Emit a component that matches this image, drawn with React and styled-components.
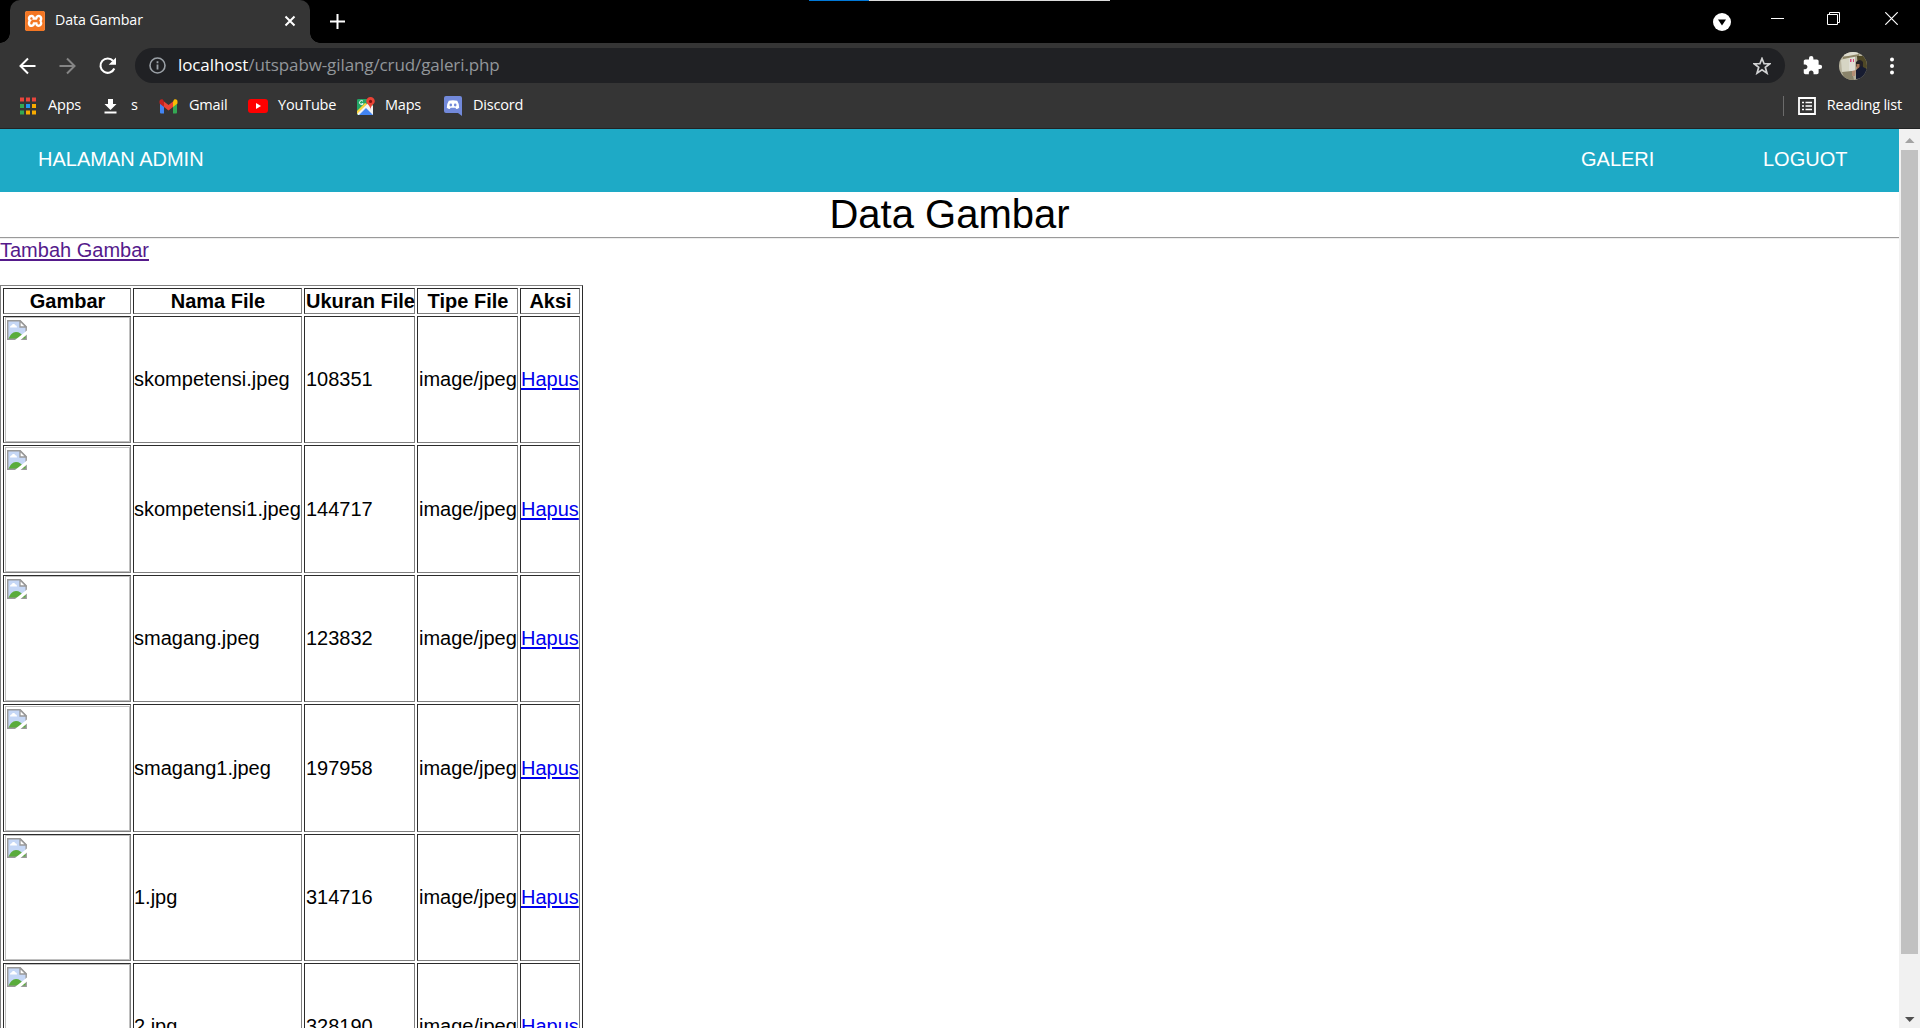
import React from "react";
import styled, { createGlobalStyle } from "styled-components";
import { SiXampp } from "react-icons/si";

const Global = createGlobalStyle`
  * { box-sizing: border-box; }
  html, body { margin: 0; padding: 0; overflow: hidden; background: #fff; }
`;

const ui = `"Open Sans", "Noto Sans", sans-serif`;

const Window = styled.div`
  width: 1920px;
  height: 1028px;
  display: flex;
  flex-direction: column;
  overflow: hidden;
  font-family: "Liberation Sans", Arial, sans-serif;
  color: #000;
`;

const TabStrip = styled.header`
  position: relative;
  height: 43px;
  flex: none;
  display: flex;
  background: #000;
  padding-left: 10px;
`;

const TaskLine = styled.div`
  position: absolute;
  top: 0;
  left: 809px;
  width: 301px;
  height: 1px;
  background: linear-gradient(to right, #0078d7 60px, #dcdcdc 60px);
`;

const Tab = styled.div`
  position: relative;
  width: 300px;
  height: 43px;
  background: #353535;
  border-radius: 10px 10px 0 0;
  display: flex;
  align-items: center;
  padding: 0 14px 1px 15px;
  &::before, &::after {
    content: "";
    position: absolute;
    bottom: 0;
    width: 10px;
    height: 10px;
  }
  &::before { left: -10px; background: radial-gradient(circle at 0 0, #000 9.5px, #353535 10px); }
  &::after { right: -10px; background: radial-gradient(circle at 100% 0, #000 9.5px, #353535 10px); }
`;

const Favicon = styled.div`
  width: 20px;
  height: 20px;
  border-radius: 3px;
  background: #fff;
  color: #f37623;
  svg { display: block; }
`;

const Label = styled.span`
  font-family: ${ui};
  font-size: ${(p) => p.$size || 14.5}px;
  letter-spacing: ${(p) => (p.$track === undefined ? -0.2 : p.$track)}px;
  line-height: 20px;
  white-space: nowrap;
  color: ${(p) => p.$color || "#fff"};
`;

const TabTitle = styled.div`
  flex: 1;
  margin-left: 10px;
  padding-bottom: 2px;
  display: flex;
`;

const NewTab = styled.div`
  margin-left: 20px;
  display: flex;
  align-items: center;
`;

const WindowControls = styled.div`
  margin-left: auto;
  display: flex;
  align-items: flex-start;
  padding: 12px 22px 0 0;
  svg { display: block; }
`;

const Control = styled.div`
  margin-left: ${(p) => p.$gap || 0}px;
  margin-top: ${(p) => p.$drop || 0}px;
`;

const Toolbar = styled.div`
  height: 45px;
  flex: none;
  display: flex;
  align-items: center;
  background: #353535;
  padding: 0 23px 0 18px;
  svg { display: block; flex: none; }
`;

const NavIcon = styled.div`
  width: 20px;
  margin-right: 20px;
`;

const Omnibox = styled.div`
  width: 1650px;
  height: 35px;
  margin-left: -3px;
  border-radius: 18px;
  background: #202124;
  display: flex;
  align-items: center;
  padding: 0 14px 0 14px;
`;

const Address = styled.div`
  flex: 1;
  margin-left: 12px;
  padding-bottom: 1px;
  display: flex;
`;

const Extension = styled.div`
  margin-left: 17px;
`;

const Avatar = styled.div`
  margin-left: 16px;
`;

const Menu = styled.div`
  margin-left: auto;
`;

const Bookmarks = styled.div`
  height: 41px;
  flex: none;
  display: flex;
  align-items: flex-start;
  background: #353535;
  border-bottom: 1px solid #222324;
  padding: 7px 18px 0 19px;
  ${Label} { margin-bottom: 2px; }
`;

const Bookmark = styled.div`
  width: ${(p) => p.$width}px;
  display: flex;
  align-items: center;
  gap: ${(p) => p.$gap || 11}px;
  svg { display: block; flex: none; }
`;

const ReadingList = styled.div`
  margin: 1px 0 0 auto;
  height: 20px;
  display: flex;
  align-items: center;
  gap: 11px;
  border-left: 1px solid #6b6b6b;
  padding-left: 14px;
`;

const Viewport = styled.div`
  flex: 1;
  min-height: 0;
  display: flex;
`;

const Page = styled.main`
  flex: 1;
  overflow: hidden;
  background: #fff;
`;

const SiteNav = styled.nav`
  height: 63px;
  background: #1eaac6;
  color: #fff;
  display: flex;
  padding: 18px 52px 0 38px;
  font-size: 20px;
  line-height: 24px;
`;

const NavItem = styled.span`
  display: block;
  width: ${(p) => p.$width}px;
  white-space: nowrap;
`;

const NavLinks = styled.div`
  margin-left: auto;
  display: flex;
  gap: 108px;
`;

const Title = styled.h1`
  margin: 0;
  height: 45px;
  font-weight: 400;
  font-size: 40px;
  line-height: 45px;
  text-align: center;
`;

const Rule = styled.hr`
  margin: 0;
  height: 2px;
  border: 0;
  border-top: 1px solid #9a9a9a;
  background: #eee;
`;

const Actions = styled.div`
  height: 46px;
  font-size: 20px;
  line-height: 23px;
`;

const Link = styled.a`
  color: ${(p) => (p.$visited ? "#551a8b" : "#0000ee")};
  text-decoration: underline;
  text-decoration-thickness: 2px;
  text-underline-offset: 2px;
`;

const Table = styled.table`
  width: 583px;
  table-layout: fixed;
  border: 1px solid;
  border-color: #808080 #2b2b2b #2b2b2b #808080;
  border-collapse: separate;
  border-spacing: 2px;
  font-size: 20px;
  line-height: 23px;
`;

const HeadCell = styled.th`
  height: 26px;
  padding: 0 0 0 1px;
  border: 1px solid;
  border-color: #2b2b2b #808080 #808080 #2b2b2b;
  white-space: nowrap;
`;

const Cell = styled.td`
  height: ${(p) => p.$height}px;
  padding: 0 0 0 ${(p) => p.$inset || 0}px;
  border: 1px solid;
  border-color: #2b2b2b #808080 #808080 #2b2b2b;
  white-space: nowrap;
`;

const PictureCell = styled(Cell)`
  padding: ${(p) => p.$height - 127}px 0 0 1px;
  vertical-align: top;
`;

const Missing = styled.div`
  width: 125px;
  height: 125px;
  border: 1px solid #c0c0c0;
  padding: 2px 1px;
  svg { display: block; }
`;

const Scrollbar = styled.div`
  width: 21px;
  flex: none;
  background: #f1f1f1;
  display: flex;
  flex-direction: column;
  align-items: center;
  svg { display: block; flex: none; }
`;

const Thumb = styled.div`
  width: 17px;
  height: 804px;
  background: #c1c1c1;
  margin-bottom: auto;
`;

const BrokenIcon = () => (
  <svg width="20" height="20" viewBox="0 0 20 20">
    <path d="M1 1h12l6 6v12H1z" fill="#c5d7f6" />
    <path d="M3 7.500c0-1.600 1-2 1.600-2C5 3.400 7.800 3.400 8.200 5.200c1.300 0 1.800 1 1.800 2.300z" fill="#fff" />
    <path d="M1.500 19c1.500-4 4-7 7.500-7s5 2 6.500 3.500L19 14v5z" fill="#5aac3c" />
    <path d="M.7.7h12.500l6 6V19.300H.7z" fill="none" stroke="#999" strokeWidth="1.4" />
    <path d="M13 1v6h6z" fill="#fff" stroke="#999" strokeWidth="1.3" />
    <path d="M8 20 20 10.500V14.500l-6.500 5.500z" fill="#fff" />
  </svg>
);

const files = [
  ["skompetensi.jpeg", "108351", 127],
  ["skompetensi1.jpeg", "144717", 128],
  ["smagang.jpeg", "123832", 127],
  ["smagang1.jpeg", "197958", 128],
  ["1.jpg", "314716", 127],
  ["2.jpg", "328190", 127],
];

const appColors = ["#e8453c", "#e8453c", "#e8453c", "#34a853", "#2196f3", "#f9ab00", "#34a853", "#f9ab00", "#f9ab00"];

export default function App() {
  return (
    <Window>
      <Global />
      <TabStrip>
        <TaskLine />
        <Tab>
          <Favicon><SiXampp size={20} /></Favicon>
          <TabTitle><Label $size={14.2} $track={-0.05}>Data Gambar</Label></TabTitle>
          <svg width="12" height="12" viewBox="0 0 12 12"><path d="M1.500 1.500l9 9m0-9l-9 9" stroke="#fff" strokeWidth="2" /></svg>
        </Tab>
        <NewTab>
          <svg width="15" height="15" viewBox="0 0 15 15"><path d="M7.500 0v15M0 7.500h15" stroke="#fff" strokeWidth="2" /></svg>
        </NewTab>
        <WindowControls>
          <Control $drop={1}>
            <svg width="18" height="18" viewBox="0 0 18 18"><circle cx="9" cy="9" r="9" fill="#fff" /><path d="M5 6.500h8L9 12.500z" fill="#000" /></svg>
          </Control>
          <Control $gap={40} $drop={6}>
            <svg width="13" height="1" viewBox="0 0 13 1"><path d="M0 .5h13" stroke="#fff" /></svg>
          </Control>
          <Control $gap={43}>
            <svg width="13" height="13" viewBox="0 0 13 13"><path d="M.5 2.500h10v10H.5zM2.500 2.500v-2h10v10h-2" fill="none" stroke="#fff" /></svg>
          </Control>
          <Control $gap={45}>
            <svg width="13" height="13" viewBox="0 0 13 13"><path d="M.3.3l12.400 12.400m0-12.400L.3 12.700" stroke="#fff" strokeWidth="1.200" /></svg>
          </Control>
        </WindowControls>
      </TabStrip>

      <Toolbar>
        <NavIcon><svg width="20" height="20" viewBox="0 0 20 20"><path d="M17.500 10H2.500m7.500-7.500L2.500 10l7.500 7.500" fill="none" stroke="#fff" strokeWidth="2" /></svg></NavIcon>
        <NavIcon><svg width="20" height="20" viewBox="0 0 20 20"><path d="M1.500 10h15M9 2.500 16.500 10 9 17.500" fill="none" stroke="#858585" strokeWidth="2" /></svg></NavIcon>
        <NavIcon><svg width="20" height="20" viewBox="0 0 20 20"><path d="M16.300 12.500A7.200 7.200 0 1 1 15.200 5" fill="none" stroke="#fff" strokeWidth="2.100" /><path d="M18 1.500v7.300h-7.300z" fill="#fff" /></svg></NavIcon>
        <Omnibox>
          <svg width="17" height="17" viewBox="0 0 17 17"><circle cx="8.500" cy="8.500" r="7.500" fill="none" stroke="#9aa0a6" strokeWidth="1.600" /><path d="M8.500 7.500v5M8.500 4.300v1.900" stroke="#9aa0a6" strokeWidth="1.800" /></svg>
          <Address>
            <Label $size={17} $track={-0.1}>localhost</Label>
            <Label $size={17} $track={-0.1} $color="#92969a">/utspabw-gilang/crud/galeri.php</Label>
          </Address>
          <svg width="18" height="18" viewBox="0 0 24 24"><path d="M12 2l2.800 7h7.700l-6.100 4.800 2.200 7.700L12 17.100l-6.600 4.400 2.200-7.700L1.500 9h7.700z" fill="none" stroke="#d0d1d2" strokeWidth="2.300" /></svg>
        </Omnibox>
        <Extension>
          <svg width="21" height="21" viewBox="0 0 24 24"><path d="M20.500 11H19V7c0-1.100-.9-2-2-2h-4V3.500a2.500 2.500 0 0 0-5 0V5H4c-1.100 0-2 .9-2 2v3.800h1.500c1.500 0 2.700 1.200 2.700 2.700S5 16.200 3.500 16.200H2V20c0 1.100.9 2 2 2h3.800v-1.500c0-1.500 1.200-2.700 2.700-2.700s2.700 1.200 2.700 2.700V22H17c1.100 0 2-.9 2-2v-4h1.500a2.500 2.500 0 0 0 0-5z" fill="#fff" /></svg>
        </Extension>
        <Avatar>
          <svg width="28" height="28" viewBox="0 0 28 28">
            <defs><clipPath id="face"><circle cx="14" cy="14" r="14" /></clipPath></defs>
            <g clipPath="url(#face)">
              <path d="M0 0h28v28H0z" fill="#b7b39e" />
              <path d="M5 0h14v4H5z" fill="#dedccf" />
              <path d="M2 8l9-3v15H3z" fill="#d6d5c4" />
              <path d="M10 5l6-1v15h-6z" fill="#e0dfd6" />
              <path d="M4 5l16-3v2L4 7z" fill="#8d8465" />
              <path d="M18 4h10v14h-9z" fill="#4f4826" />
              <path d="M11 7h1.500v3H11zm3 0h1v3h-1z" fill="#d2497c" />
              <path d="M17 10q4-4 7 0v5l-4 3-3-4z" fill="#242125" />
              <path d="M17.500 12h3v5h-3z" fill="#a97659" />
              <path d="M17 18l5-4 6 3v9l-11 1z" fill="#171c31" />
              <path d="M3 20l10-1 2 9H6z" fill="#8a846b" />
              <path d="M13 19l4-1-1 6h-3z" fill="#b58f74" />
            </g>
          </svg>
        </Avatar>
        <Menu><svg width="10" height="18" viewBox="0 0 10 18"><g fill="#fff"><circle cx="5" cy="2.500" r="2" /><circle cx="5" cy="9" r="2" /><circle cx="5" cy="15.500" r="2" /></g></svg></Menu>
      </Toolbar>

      <Bookmarks>
        <Bookmark $width={85}>
          <svg width="18" height="18" viewBox="0 0 18 18">{appColors.map((c, i) => <rect key={i} x={(i % 3) * 6 + 1} y={Math.floor(i / 3) * 6.500 + 0.500} width="4" height="4" fill={c} />)}</svg>
          <Label>Apps</Label>
        </Bookmark>
        <Bookmark $width={55} $gap={14}>
          <svg width="13" height="16" viewBox="0 0 13 16"><path d="M4 1h5v5h3.500l-6 6-6-6H4zM.5 13.500h12v2H.5z" fill="#fff" /></svg>
          <Label>s</Label>
        </Bookmark>
        <Bookmark $width={89}>
          <svg width="19" height="15" viewBox="0 0 19 15"><path d="M1 3v10.500q0 1 1 1h3V6z" fill="#4285f4" /><path d="M18 3v10.500q0 1-1 1h-3V6z" fill="#34a853" /><path d="M14 2.500V8l4.500-3.400V2.500c0-2-2.200-2.800-3.500-1.700z" fill="#fbbc04" /><path d="M5 2.500v5.500L.5 4.600V2.500C.5.500 2.700-.3 4 .8z" fill="#c5221f" /><path d="M5 2.500v5.500l4.500 3.400L14 8V2.500L9.500 5.900z" fill="#ea4335" /></svg>
          <Label>Gmail</Label>
        </Bookmark>
        <Bookmark $width={109} $gap={10}>
          <svg width="20" height="14" viewBox="0 0 20 14"><rect width="20" height="14" rx="3" fill="#f00" /><path d="M8 4l5 3-5 3z" fill="#fff" /></svg>
          <Label>YouTube</Label>
        </Bookmark>
        <Bookmark $width={87} $gap={10}>
          <svg width="18" height="18" viewBox="0 0 18 18"><path d="M1.500 2H16v16H1q-1 0-1-1V3q0-1 1.500-1z" fill="#23a566" /><path d="M0 16 12 5l4 4v9H1z" fill="#f2f2f2" /><path d="M2 18l7-7 7 7z" fill="#4285f4" /><path d="M0 14v3l10-10-2-1z" fill="#ffd43c" /><path d="M13.500 0A4.300 4.300 0 0 0 9.200 4.300c0 3 4.300 3.700 4.300 8.700 0-5 4.300-5.700 4.300-8.700A4.300 4.300 0 0 0 13.500 0z" fill="#ea4335" /><circle cx="13.500" cy="4.400" r="1.600" fill="#811411" /><path d="M6 4.200a2 2 0 1 0 .2 2.500H4.500" fill="none" stroke="#fff" /></svg>
          <Label>Maps</Label>
        </Bookmark>
        <Bookmark $width={90}>
          <svg width="18" height="20" viewBox="0 0 18 20"><path d="M2 0h14q2 0 2 2v18l-4-3H2q-2 0-2-2V2q0-2 2-2z" fill="#7289da" /><path d="M4.800 4.800q4-1.300 8.400 0 2.200 3.400 2 7-1.500 1.200-3 1.200l-.8-1.200H6.600L5.800 13q-1.500 0-3-1.200-.2-3.600 2-7z" fill="#fff" /><ellipse cx="6.800" cy="9" rx="1.300" ry="1.400" fill="#7289da" /><ellipse cx="11.200" cy="9" rx="1.300" ry="1.400" fill="#7289da" /></svg>
          <Label>Discord</Label>
        </Bookmark>
        <ReadingList>
          <svg width="18" height="18" viewBox="0 0 18 18"><path d="M1 1h16v16H1z" fill="none" stroke="#fff" strokeWidth="1.800" /><path d="M4 5.500h2m1.500 0H14M4 9h2m1.500 0H14M4 12.500h2m1.500 0H14" stroke="#fff" strokeWidth="1.700" /></svg>
          <Label>Reading list</Label>
        </ReadingList>
      </Bookmarks>

      <Viewport>
        <Page>
          <SiteNav>
            <NavItem $width={166}>HALAMAN ADMIN</NavItem>
            <NavLinks>
              <NavItem $width={74}>GALERI</NavItem>
              <NavItem $width={84}>LOGUOT</NavItem>
            </NavLinks>
          </SiteNav>
          <Title>Data Gambar</Title>
          <Rule />
          <Actions><Link $visited>Tambah Gambar</Link></Actions>
          <Table>
            <colgroup>
              <col width="128" /><col width="169" /><col width="111" /><col width="101" /><col width="60" />
            </colgroup>
            <thead>
              <tr>{["Gambar", "Nama File", "Ukuran File", "Tipe File", "Aksi"].map((h) => <HeadCell key={h}>{h}</HeadCell>)}</tr>
            </thead>
            <tbody>
              {files.map(([name, size, height]) => (
                <tr key={name}>
                  <PictureCell $height={height}><Missing><BrokenIcon /></Missing></PictureCell>
                  <Cell $height={height}>{name}</Cell>
                  <Cell $height={height} $inset={1}>{size}</Cell>
                  <Cell $height={height} $inset={1}>image/jpeg</Cell>
                  <Cell $height={height}><Link>Hapus</Link></Cell>
                </tr>
              ))}
            </tbody>
          </Table>
        </Page>
        <Scrollbar>
          <svg width="21" height="21" viewBox="0 0 21 21"><path d="M6 14h9.500L10.700 9z" fill="#a3a3a3" /></svg>
          <Thumb />
          <svg width="21" height="21" viewBox="0 0 21 21"><path d="M6 10h9.500L10.700 15z" fill="#505050" /></svg>
        </Scrollbar>
      </Viewport>
    </Window>
  );
}
